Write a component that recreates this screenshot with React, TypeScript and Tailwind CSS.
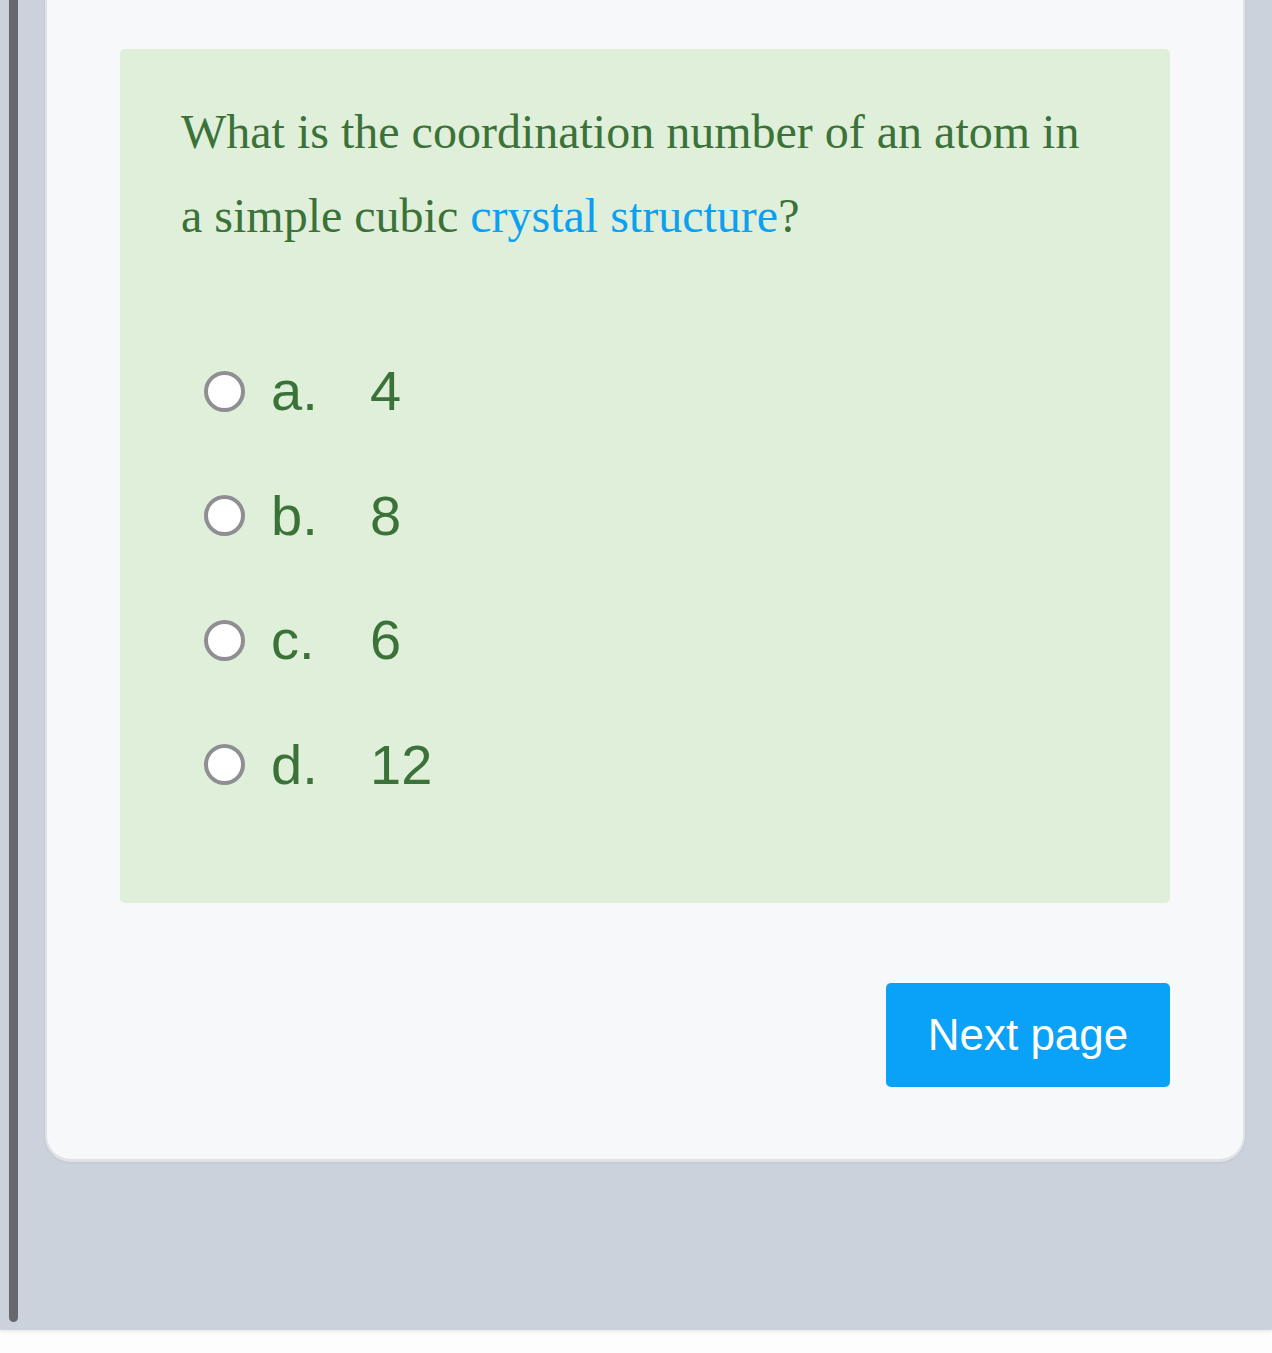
import { useState } from 'react';

// ---------------------------------------------------------------------------
// Quiz question page (single multiple-choice question + next page button)
// ---------------------------------------------------------------------------

const answers = [
  { key: 'a', label: 'a.', value: '4' },
  { key: 'b', label: 'b.', value: '8' },
  { key: 'c', label: 'c.', value: '6' },
  { key: 'd', label: 'd.', value: '12' },
];

export default function App() {
  const [selected, setSelected] = useState<string | null>(null);

  return (
    <div className="flex h-[1353px] w-[1272px] flex-col overflow-hidden bg-[#fdfdfd]">
      <div className="flex h-[1330px] bg-[#cbd2db] shadow-[0_2px_3px_rgba(0,0,0,0.08)]">
        {/* left rail */}
        <div className="ml-[9px] h-[1322px] w-[9px] rounded-b-full bg-[#66686d]" />

        {/* card */}
        <div className="ml-[27px] flex h-[1162px] w-[1200px] flex-col rounded-b-[26px] border-x-2 border-b-[3px] border-[#dfe2e7] bg-[#f7f8fa] px-[73px] pt-[49px] shadow-[0_1px_3px_rgba(0,0,0,0.06)]">
          <div className="rounded-[5px] bg-[#dfefd9] pb-[76px] pl-[61px] pr-[40px] pt-[41px]">
            <p className="font-['Liberation_Serif',serif] text-[48px] leading-[84px] text-[#3a7238]">
              What is the coordination number of an atom in
              <br />a simple cubic <span className="text-[#0d9ff0]">crystal structure</span>?
            </p>

            <div className="mt-[71px] flex flex-col">
              {answers.map((a) => (
                <label
                  key={a.key}
                  className="flex h-[124.5px] cursor-pointer items-center pl-[23px] font-['Liberation_Sans',Arial,sans-serif] text-[56px] text-[#3a7238]"
                >
                  <input
                    type="radio"
                    name="answer"
                    className="sr-only"
                    checked={selected === a.key}
                    onChange={() => setSelected(a.key)}
                  />
                  <span className="flex h-[41px] w-[41px] items-center justify-center rounded-full border-[4px] border-[#8e8e93] bg-white">
                    {selected === a.key && <span className="h-[17px] w-[17px] rounded-full bg-[#0aa1f8]" />}
                  </span>
                  <span className="ml-[26px] w-[99px] leading-none">{a.label}</span>
                  <span className="leading-none">{a.value}</span>
                </label>
              ))}
            </div>
          </div>

          <div className="mt-[80px] flex justify-end">
            <button
              type="button"
              className="h-[104px] w-[284px] rounded-[5px] bg-[#0aa1f8] font-['Liberation_Sans',Arial,sans-serif] text-[44px] text-white"
            >
              Next page
            </button>
          </div>
        </div>
      </div>
    </div>
  );
}
